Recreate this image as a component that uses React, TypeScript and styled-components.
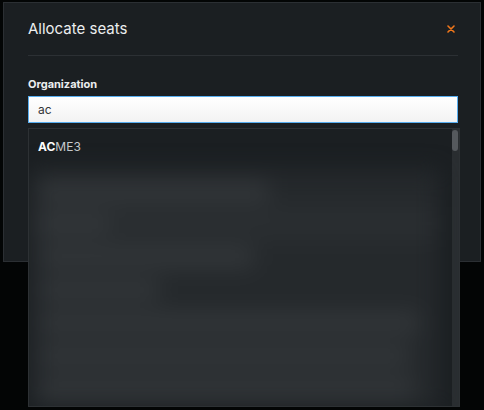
import styled, { createGlobalStyle } from "styled-components";

const GlobalStyle = createGlobalStyle`
  html, body {
    margin: 0;
    background: #030505;
    font-family: Inter, "Noto Sans", sans-serif;
  }
`;

const censoredRows = [
  { width: 230, hover: false },
  { width: 70, hover: true },
  { width: 215, hover: false },
  { width: 120, hover: false },
  { width: 380, hover: false },
  { width: 370, hover: false },
  { width: 375, hover: false },
];

export default function App(): JSX.Element {
  return <>
    <GlobalStyle />
    <Page>
      <Modal>
        <Header>
          <Title>Allocate seats</Title>
          <Close aria-label="Close">
            <svg width="8" height="8" viewBox="0 0 8 8">
              <path d="M1 1L7 7M7 1L1 7" stroke="#f0761a" strokeWidth="1.6" strokeLinecap="round" />
            </svg>
          </Close>
        </Header>
        <Field>
          <Label>Organization</Label>
          <Input defaultValue="ac" />
          <Dropdown>
            <List>
              <Option><b>AC</b>ME3</Option>
              <Censored>
                {censoredRows.map((row, index) => <CensoredRow $hover={row.hover} key={index}>
                  <Smudge style={{ width: row.width }} />
                </CensoredRow>)}
              </Censored>
            </List>
            <Track>
              <Thumb />
            </Track>
          </Dropdown>
        </Field>
      </Modal>
    </Page>
  </>;
}

const Page = styled.div`
  width: 484px;
  height: 410px;
  padding: 2px 0 0 3px;
  box-sizing: border-box;
  overflow: hidden;
`;

const Modal = styled.section`
  width: 478px;
  height: 260px;
  box-sizing: border-box;
  padding: 0 22px 0 24px;
  background: #1b1f22;
  border: 1px solid #2b2f33;
`;

const Header = styled.header`
  display: flex;
  align-items: center;
  justify-content: space-between;
  padding: 16px 0;
  border-bottom: 1px solid #2c3034;
`;

const Title = styled.h2`
  margin: 0;
  font-size: 15px;
  line-height: 20px;
  font-weight: 400;
  color: #eceeef;
`;

const Close = styled.button`
  display: flex;
  align-items: center;
  justify-content: center;
  width: 14px;
  height: 14px;
  padding: 0;
  border: none;
  background: none;
  cursor: pointer;
`;

const Field = styled.div`
  position: relative;
  display: flex;
  flex-direction: column;
  padding-top: 21px;
`;

const Label = styled.label`
  font-size: 11px;
  line-height: 14px;
  font-weight: 700;
  color: #eceeef;
  margin-bottom: 5px;
`;

const Input = styled.input`
  width: 430px;
  height: 27px;
  box-sizing: border-box;
  padding: 0 9px;
  border: 1px solid #58aef0;
  background: linear-gradient(#ffffff, #f3f3f3);
  font-family: Inter, "Noto Sans", sans-serif;
  font-size: 12px;
  color: #333639;
  outline: none;
`;

const Dropdown = styled.div`
  position: absolute;
  left: 0;
  top: calc(100% + 5px);
  width: 432px;
  height: 279px;
  box-sizing: border-box;
  display: flex;
  background: #1b1f22;
  border: 1px solid #2d3134;
  overflow: hidden;
`;

const List = styled.ul`
  flex: 1;
  display: flex;
  flex-direction: column;
  margin: 0;
  padding: 0;
  list-style: none;
  min-width: 0;
`;

const Option = styled.li`
  flex: none;
  padding: 10px 9px 15px;
  font-size: 12px;
  line-height: 16px;
  color: #c9cccf;

  b {
    color: #ffffff;
    font-weight: 700;
  }
`;

const Censored = styled.div`
  flex: 1;
  display: flex;
  flex-direction: column;
  margin: 0 13px 4px 2px;
  padding: 4px 0;
  background: #25292c;
  filter: blur(11px);
`;

const CensoredRow = styled.div<{ $hover: boolean }>`
  height: 33px;
  display: flex;
  align-items: center;
  padding: 0 8px;
  background: ${({ $hover }) => ($hover ? "#2a2e31" : "transparent")};
`;

const Smudge = styled.div`
  height: 20px;
  border-radius: 6px;
  background: #33373a;
`;

const Track = styled.div`
  width: 7px;
  flex: none;
  background: #2a2e31;
  padding-top: 1px;
`;

const Thumb = styled.div`
  width: 6px;
  height: 21px;
  border-radius: 3px;
  background: #55595d;
`;
